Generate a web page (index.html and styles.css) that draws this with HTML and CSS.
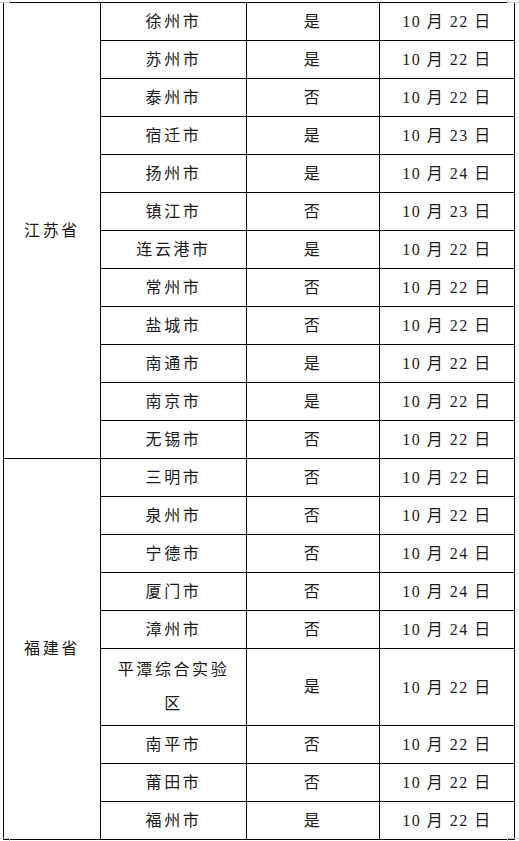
FILE: index.html
```html
<!DOCTYPE html>
<html lang="zh-CN">
<head>
<meta charset="utf-8">
<title>表格</title>
<link rel="stylesheet" href="styles.css">
</head>
<body>
<div class="page">
  <span class="mark mark-tl"></span>
  <span class="mark mark-tr"></span>
  <span class="mark mark-bl"></span>
  <span class="mark mark-br"></span>
  <table class="grid">
    <colgroup>
      <col class="c1"><col class="c2"><col class="c3"><col class="c4">
    </colgroup>
    <tbody>
      <tr><td class="prov" rowspan="12">江苏省</td><td>徐州市</td><td>是</td><td class="date">10 月 22 日</td></tr>
      <tr><td>苏州市</td><td>是</td><td class="date">10 月 22 日</td></tr>
      <tr><td>泰州市</td><td>否</td><td class="date">10 月 22 日</td></tr>
      <tr><td>宿迁市</td><td>是</td><td class="date">10 月 23 日</td></tr>
      <tr><td>扬州市</td><td>是</td><td class="date">10 月 24 日</td></tr>
      <tr><td>镇江市</td><td>否</td><td class="date">10 月 23 日</td></tr>
      <tr><td>连云港市</td><td>是</td><td class="date">10 月 22 日</td></tr>
      <tr><td>常州市</td><td>否</td><td class="date">10 月 22 日</td></tr>
      <tr><td>盐城市</td><td>否</td><td class="date">10 月 22 日</td></tr>
      <tr><td>南通市</td><td>是</td><td class="date">10 月 22 日</td></tr>
      <tr><td>南京市</td><td>是</td><td class="date">10 月 22 日</td></tr>
      <tr><td>无锡市</td><td>否</td><td class="date">10 月 22 日</td></tr>
      <tr><td class="prov" rowspan="9">福建省</td><td>三明市</td><td>否</td><td class="date">10 月 22 日</td></tr>
      <tr><td>泉州市</td><td>否</td><td class="date">10 月 22 日</td></tr>
      <tr><td>宁德市</td><td>否</td><td class="date">10 月 24 日</td></tr>
      <tr><td>厦门市</td><td>否</td><td class="date">10 月 24 日</td></tr>
      <tr><td>漳州市</td><td>否</td><td class="date">10 月 24 日</td></tr>
      <tr class="tall"><td class="wrap">平潭综合实验区</td><td>是</td><td class="date">10 月 22 日</td></tr>
      <tr><td>南平市</td><td>否</td><td class="date">10 月 22 日</td></tr>
      <tr><td>莆田市</td><td>否</td><td class="date">10 月 22 日</td></tr>
      <tr><td>福州市</td><td>是</td><td class="date">10 月 22 日</td></tr>
    </tbody>
  </table>
</div>
</body>
</html>
```
FILE: styles.css
```css
html, body {
  margin: 0;
  padding: 0;
  background: #ffffff;
}

.page {
  position: relative;
  width: 519px;
  height: 841px;
  padding: 2px 0 0 3px;
  box-sizing: border-box;
}

.grid {
  border-collapse: collapse;
  table-layout: fixed;
  width: 512px;
  font-family: "Liberation Serif", "Noto Sans CJK SC", serif;
  font-size: 16px;
  color: #1a1a1a;
}

.c1 { width: 97px; }
.c2 { width: 146px; }
.c3 { width: 133px; }
.c4 { width: 135px; }

.grid td {
  border: 1px solid #000;
  height: 38px;
  padding: 0 10px;
  text-align: center;
  vertical-align: middle;
  letter-spacing: 2.6px;
  line-height: 20px;
  box-sizing: border-box;
  white-space: nowrap;
}

.grid td.prov {
  padding: 0 4px;
}

.grid td.date {
  letter-spacing: 1.5px;
  padding-top: 1px;
}

.grid td.wrap {
  white-space: normal;
  line-height: 34px;
  padding: 4px 10px;
}

.tall td {
  height: 76px;
}

.mark {
  position: absolute;
  display: block;
  border-color: #c8c8c8;
  border-style: solid;
  border-width: 0;
}

.mark-tl {
  left: 0;
  top: 0;
  width: 9px;
  height: 2px;
  border-bottom-width: 1px;
  border-right-width: 1px;
}

.mark-tr {
  right: 0;
  top: 0;
  width: 11px;
  height: 2px;
  border-bottom-width: 1px;
  border-left-width: 1px;
}

.mark-bl {
  left: 0;
  bottom: 0;
  width: 9px;
  height: 2px;
  border-top-width: 1px;
  border-right-width: 1px;
}

.mark-br {
  right: 0;
  bottom: 0;
  width: 11px;
  height: 2px;
  border-top-width: 1px;
  border-left-width: 1px;
}
```
